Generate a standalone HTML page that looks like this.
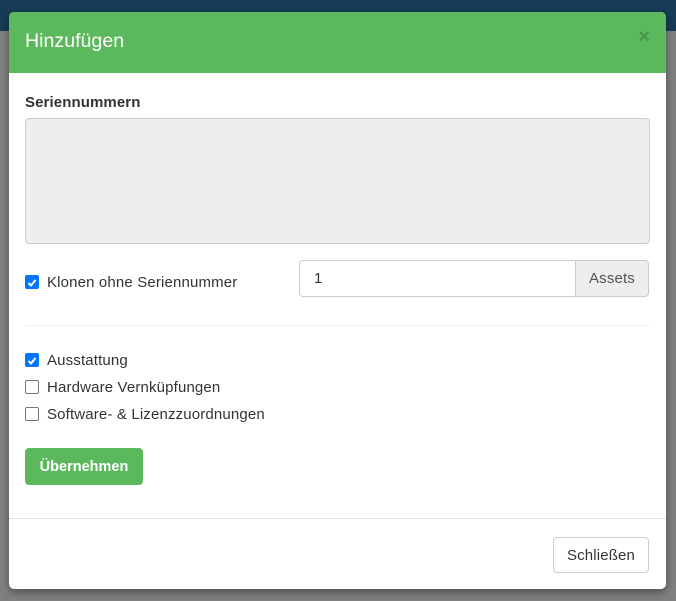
<!DOCTYPE html>
<html><head><style>
*{box-sizing:border-box}
body{margin:0;width:676px;height:601px;overflow:hidden;background:#808080;font-family:"Liberation Sans",sans-serif;position:relative;color:#333}
.top{position:absolute;left:0;top:0;width:676px;height:31px;background:#173c56}
.modal{position:absolute;left:9px;top:12px;width:657px;height:577px;background:#fff;border-radius:5px;overflow:hidden;box-shadow:0 3px 9px rgba(0,0,0,.4)}
.hdr{height:61px;background:#5cb85c;position:relative}
.hdr h4{margin:0;position:absolute;left:16px;top:18px;color:#fff;font-size:19.6px;font-weight:normal}
.x{position:absolute;right:16px;top:14px;color:#3f7f3f;font-size:20px;font-weight:bold;opacity:.6}
.abs{position:absolute}
.cb{position:absolute;width:14px;height:14px;border:1px solid #767676;border-radius:2px;background:#fff}
.cb.on{background:#0075ff;border-color:#0075ff}
.lbl{position:absolute;font-size:15px;letter-spacing:.15px;color:#333}
</style></head><body>
<div class="top"></div>
<div class="modal">
<div class="hdr"><h4>Hinzufügen</h4><span class="x">×</span></div>
<div class="lbl" style="left:16px;top:82px;font-weight:bold;letter-spacing:.1px">Seriennummern</div>
<div class="abs" style="left:16px;top:106px;width:625px;height:126px;background:#eee;border:1px solid #ccc;border-radius:4px"></div>
<div class="cb on" style="left:16px;top:263px"><svg width="12" height="12" viewBox="0 0 12 12"><path d="M2.5 6L5 8.5L9.5 3" stroke="#fff" stroke-width="2" fill="none"/></svg></div>
<div class="lbl" style="left:38px;top:262px">Klonen ohne Seriennummer</div>
<div class="abs" style="left:290px;top:248px;width:278px;height:37px;border:1px solid #ccc;border-radius:4px 0 0 4px;font-size:15px;padding:9px 14px">1</div>
<div class="abs" style="left:566px;top:248px;width:74px;height:37px;border:1px solid #ccc;border-radius:0 4px 4px 0;background:#eee;font-size:15px;letter-spacing:.15px;padding:9px 0;text-align:center;color:#555">Assets</div>
<div class="abs" style="left:16px;top:313px;width:625px;height:1px;background:#eee"></div>
<div class="cb on" style="left:16px;top:341px"><svg width="12" height="12" viewBox="0 0 12 12"><path d="M2.5 6L5 8.5L9.5 3" stroke="#fff" stroke-width="2" fill="none"/></svg></div>
<div class="lbl" style="left:38px;top:340px">Ausstattung</div>
<div class="cb" style="left:16px;top:368px"></div>
<div class="lbl" style="left:38px;top:367px">Hardware Vernküpfungen</div>
<div class="cb" style="left:16px;top:395px"></div>
<div class="lbl" style="left:38px;top:394px">Software- &amp; Lizenzzuordnungen</div>
<div class="abs" style="left:16px;top:436px;width:118px;height:37px;background:#5cb85c;border-radius:4px;color:#fff;font-size:14.5px;font-weight:bold;text-align:center;line-height:38px">Übernehmen</div>
<div class="abs" style="left:0;top:506px;width:657px;height:1px;background:#e5e5e5"></div>
<div class="abs" style="left:544px;top:525px;width:96px;height:36px;border:1px solid #ccc;border-radius:4px;font-size:15px;letter-spacing:.15px;text-align:center;line-height:35px">Schließen</div>
</div>
</body></html>
